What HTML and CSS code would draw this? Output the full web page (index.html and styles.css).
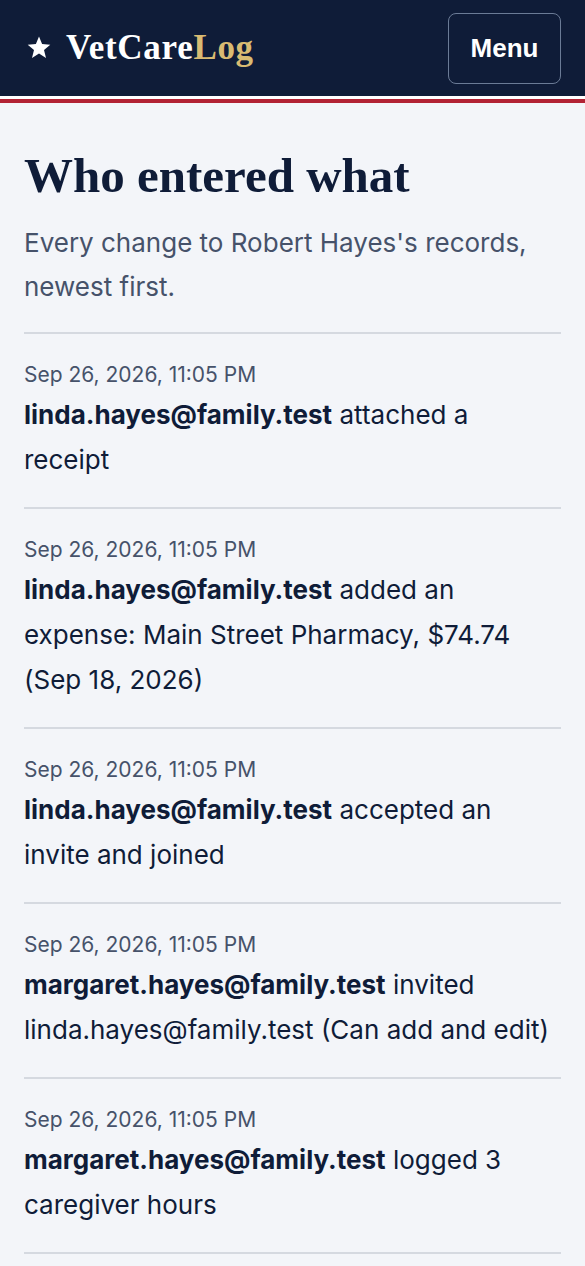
FILE: index.html
```html
<!DOCTYPE html>
<html lang="en">
<head>
    <meta charset="UTF-8">
    <meta name="viewport" content="width=device-width, initial-scale=1.0">
    <title>Who entered what | VetCareLog</title>
    <link rel="stylesheet" href="styles.css">
</head>
<body>
    <header class="topbar">
        <a class="brand" href="#">
            <svg class="brand-star" viewBox="0 0 24 24" width="24" height="24" aria-hidden="true">
                <path d="M12 1.5l3.1 7.6 8.2.6-6.3 5.3 2 8-7-4.4-7 4.4 2-8L.7 9.7l8.2-.6z" fill="#ffffff"/>
            </svg>
            <span class="brand-name">VetCare<span class="brand-accent">Log</span></span>
        </a>
        <button class="menu-btn">Menu</button>
    </header>
    <main class="page">
        <h1 class="title">Who entered what</h1>
        <p class="lead">Every change to Robert Hayes's records, newest first.</p>
        <ul class="log">
            <li class="entry">
                <div class="entry-date">Sep 26, 2026, 11:05 PM</div>
                <p class="entry-text"><strong>linda.hayes@family.test</strong> attached a receipt</p>
            </li>
            <li class="entry">
                <div class="entry-date">Sep 26, 2026, 11:05 PM</div>
                <p class="entry-text"><strong>linda.hayes@family.test</strong> added an expense: Main Street Pharmacy, $74.74 (Sep 18, 2026)</p>
            </li>
            <li class="entry">
                <div class="entry-date">Sep 26, 2026, 11:05 PM</div>
                <p class="entry-text"><strong>linda.hayes@family.test</strong> accepted an invite and joined</p>
            </li>
            <li class="entry">
                <div class="entry-date">Sep 26, 2026, 11:05 PM</div>
                <p class="entry-text"><strong>margaret.hayes@family.test</strong> invited linda.hayes@family.test (Can add and edit)</p>
            </li>
            <li class="entry">
                <div class="entry-date">Sep 26, 2026, 11:05 PM</div>
                <p class="entry-text"><strong>margaret.hayes@family.test</strong> logged 3 caregiver hours</p>
            </li>
        </ul>
    </main>
</body>
</html>
```

FILE: styles.css
```css
body {
    margin: 0;
    padding: 0;
    font-family: Inter, "Noto Sans", sans-serif;
    background-color: #f3f5f9;
    color: #0f1c38;
}

.topbar {
    display: flex;
    justify-content: space-between;
    align-items: center;
    height: 96px;
    padding: 0 24px 0 27px;
    background-color: #0f1c38;
    border-bottom: 3px solid #ffffff;
    box-shadow: 0 4px 0 #b22234;
    margin-bottom: 4px;
}

.brand {
    display: flex;
    align-items: center;
    gap: 15px;
    color: #ffffff;
    text-decoration: none;
}
.brand-star {
    display: block;
    margin-top: -2px;
}
.brand-name {
    font-family: "Liberation Serif", "DejaVu Serif", serif;
    font-weight: bold;
    font-size: 35px;
    letter-spacing: 0.7px;
}
.brand-accent {
    color: #d9bb72;
}

.menu-btn {
    width: 113px;
    height: 71px;
    margin-top: 1px;
    background-color: transparent;
    color: #ffffff;
    border: 1px solid #6b7b96;
    border-radius: 8px;
    font-family: "Liberation Sans", Arial, sans-serif;
    font-weight: bold;
    font-size: 26px;
}
.menu-btn:hover {
    cursor: pointer;
}

.page {
    padding: 0 24px;
}

.title {
    margin: 0;
    padding-top: 43px;
    font-family: "Liberation Serif", "DejaVu Serif", serif;
    font-size: 49px;
    line-height: 60px;
    font-weight: bold;
}

.lead {
    margin: 15px 0 0;
    font-size: 26px;
    line-height: 44px;
    color: #46526a;
}

.log {
    list-style: none;
    margin: 23px 0 0;
    padding: 0;
    border-top: 2px solid #d5d9e0;
}

.entry {
    padding: 26px 0 25px;
    border-bottom: 2px solid #d5d9e0;
}
.entry-date {
    font-size: 21px;
    line-height: 30px;
    color: #46526a;
}
.entry-text {
    margin: 2px 0 0;
    padding-right: 6px;
    font-size: 26px;
    line-height: 45px;
}
.entry-text strong {
    font-weight: 700;
}
```
